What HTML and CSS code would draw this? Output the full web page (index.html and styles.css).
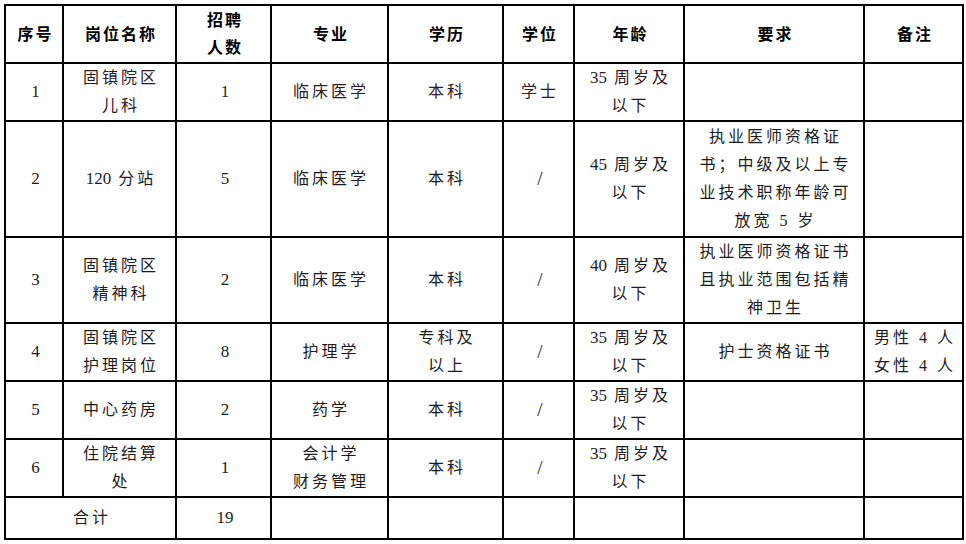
FILE: index.html
```html
<!DOCTYPE html>
<html lang="zh-CN">
<head>
<meta charset="utf-8">
<title>招聘岗位</title>
<link rel="stylesheet" href="styles.css">
</head>
<body>
<table class="grid">
  <colgroup>
    <col class="c1"><col class="c2"><col class="c3"><col class="c4"><col class="c5"><col class="c6"><col class="c7"><col class="c8"><col class="c9">
  </colgroup>
  <thead>
    <tr class="h58">
      <th>序号</th>
      <th>岗位名称</th>
      <th>招聘<br>人数</th>
      <th>专业</th>
      <th>学历</th>
      <th>学位</th>
      <th>年龄</th>
      <th>要求</th>
      <th>备注</th>
    </tr>
  </thead>
  <tbody>
    <tr class="h58 first">
      <td><span class="n">1</span></td>
      <td>固镇院区<br>儿科</td>
      <td><span class="n">1</span></td>
      <td>临床医学</td>
      <td>本科</td>
      <td>学士</td>
      <td><span class="n">35</span> 周岁及<br>以下</td>
      <td></td>
      <td></td>
    </tr>
    <tr class="h116">
      <td><span class="n">2</span></td>
      <td><span class="n">120</span> 分站</td>
      <td><span class="n">5</span></td>
      <td>临床医学</td>
      <td>本科</td>
      <td><span class="slash">/</span></td>
      <td><span class="n">45</span> 周岁及<br>以下</td>
      <td>执业医师资格证<br>书；中级及以上专<br>业技术职称年龄可<br>放宽 5 岁</td>
      <td></td>
    </tr>
    <tr class="h86">
      <td><span class="n">3</span></td>
      <td>固镇院区<br>精神科</td>
      <td><span class="n">2</span></td>
      <td>临床医学</td>
      <td>本科</td>
      <td><span class="slash">/</span></td>
      <td><span class="n">40</span> 周岁及<br>以下</td>
      <td>执业医师资格证书<br>且执业范围包括精<br>神卫生</td>
      <td></td>
    </tr>
    <tr class="h58">
      <td><span class="n">4</span></td>
      <td>固镇院区<br>护理岗位</td>
      <td><span class="n">8</span></td>
      <td>护理学</td>
      <td>专科及<br>以上</td>
      <td><span class="slash">/</span></td>
      <td><span class="n">35</span> 周岁及<br>以下</td>
      <td>护士资格证书</td>
      <td>男性 4 人<br>女性 4 人</td>
    </tr>
    <tr class="h58">
      <td><span class="n">5</span></td>
      <td>中心药房</td>
      <td><span class="n">2</span></td>
      <td>药学</td>
      <td>本科</td>
      <td><span class="slash">/</span></td>
      <td><span class="n">35</span> 周岁及<br>以下</td>
      <td></td>
      <td></td>
    </tr>
    <tr class="h58">
      <td><span class="n">6</span></td>
      <td>住院结算<br>处</td>
      <td><span class="n">1</span></td>
      <td>会计学<br>财务管理</td>
      <td>本科</td>
      <td><span class="slash">/</span></td>
      <td><span class="n">35</span> 周岁及<br>以下</td>
      <td></td>
      <td></td>
    </tr>
    <tr class="h42">
      <td colspan="2">合计</td>
      <td><span class="n">19</span></td>
      <td></td>
      <td></td>
      <td></td>
      <td></td>
      <td></td>
      <td></td>
    </tr>
  </tbody>
</table>
</body>
</html>
```
FILE: styles.css
```css
html, body {
  margin: 0;
  padding: 0;
  background: #ffffff;
}

body {
  padding: 4px 0 0 4px;
  font-family: "Liberation Serif", "Noto Sans CJK SC", serif;
  color: #1c1c1c;
}

.grid {
  border-collapse: collapse;
  table-layout: fixed;
  width: 960px;
}

.c1 { width: 58px; }
.c2 { width: 113px; }
.c3 { width: 95px; }
.c4 { width: 117px; }
.c5 { width: 115px; }
.c6 { width: 71px; }
.c7 { width: 110px; }
.c8 { width: 180px; }
.c9 { width: 99px; }

.grid th,
.grid td {
  border: 2px solid #000;
  padding: 0 0 0 3px;
  text-align: center;
  vertical-align: middle;
  font-size: 16px;
  line-height: 28px;
  letter-spacing: 3px;
  overflow: hidden;
  white-space: nowrap;
}

.grid th {
  font-weight: 700;
  color: #000;
  line-height: 27px;
  letter-spacing: 2px;
}

.n {
  letter-spacing: 0;
  font-size: 17px;
}

.slash {
  letter-spacing: 0;
  font-size: 19px;
}

.h58 { height: 58px; }
.h116 { height: 116px; }
.h86 { height: 86px; }
.h42 { height: 42px; }

.first td {
  color: #2e1a24;
}
```
